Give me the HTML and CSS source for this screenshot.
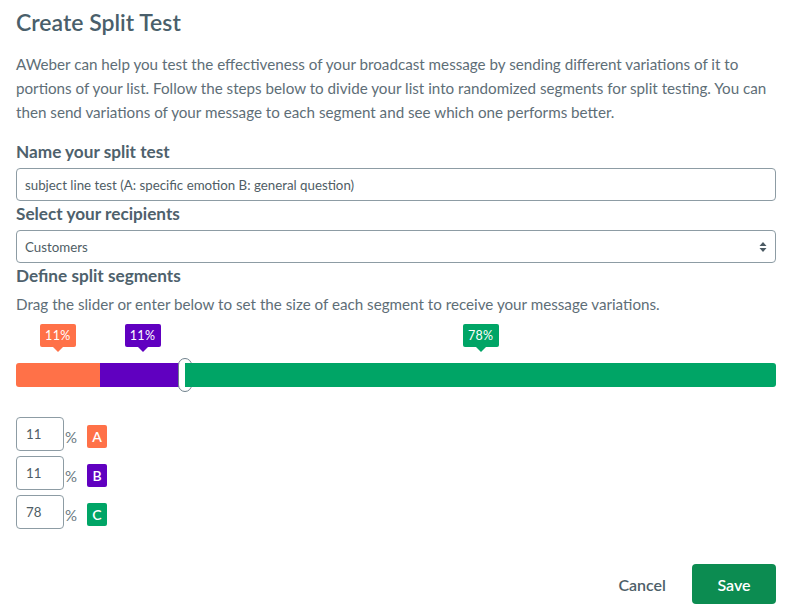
FILE: index.html
```html
<!DOCTYPE html>
<html>
<head>
<meta charset="utf-8">
<link rel="stylesheet" href="styles.css">
</head>
<body>
<div class="page">
  <h1 class="title">Create Split Test</h1>
  <p class="intro">AWeber can help you test the effectiveness of your broadcast message by sending different variations of it to portions of your list. Follow the steps below to divide your list into randomized segments for split testing. You can then send variations of your message to each segment and see which one performs better.</p>

  <h2 class="label">Name your split test</h2>
  <div class="field">subject line test (A: specific emotion B: general question)</div>

  <h2 class="label">Select your recipients</h2>
  <div class="field select">
    <span>Customers</span>
    <svg class="arrows" width="8" height="12" viewBox="0 0 8 12"><path d="M4 1 L7.5 5 L0.5 5 Z M4 11 L7.5 7 L0.5 7 Z" fill="#4b5a63"/></svg>
  </div>

  <h2 class="label">Define split segments</h2>
  <p class="hint">Drag the slider or enter below to set the size of each segment to receive your message variations.</p>

  <div class="slider">
    <div class="seg seg-a" style="width:11%"><span class="tip tip-a">11%</span></div>
    <div class="seg seg-b" style="width:11.3%"><span class="tip tip-b">11%</span><span class="handle"></span></div>
    <div class="seg seg-c"><span class="tip tip-c">78%</span></div>
  </div>

  <div class="rows">
    <div class="row"><div class="num">11</div><span class="pct">%</span><span class="badge badge-a">A</span></div>
    <div class="row"><div class="num">11</div><span class="pct">%</span><span class="badge badge-b">B</span></div>
    <div class="row"><div class="num">78</div><span class="pct">%</span><span class="badge badge-c">C</span></div>
  </div>

  <div class="actions">
    <button class="cancel">Cancel</button>
    <button class="save">Save</button>
  </div>
</div>
</body>
</html>
```

FILE: styles.css
```css
* { box-sizing: border-box; }
body {
  margin: 0;
  background: #ffffff;
  font-family: "Source Sans Pro", Lato, "Noto Sans", sans-serif;
  color: #5b6b74;
}
.page {
  padding: 6px 9px 0 16px;
  width: 785px;
}
.title {
  margin: 0;
  font-size: 23px;
  font-weight: 600;
  color: #4a5f6b;
  line-height: 32px;
}
.intro {
  margin: 14px 0 17px;
  font-size: 15.2px;
  line-height: 24px;
  color: #5e6e77;
}
.label {
  margin: 0 0 5px;
  font-size: 17.2px;
  font-weight: 700;
  color: #4e616c;
  line-height: 22px;
}
.field {
  height: 33px;
  border: 1px solid #8d9ca4;
  border-radius: 4px;
  padding: 0 8px;
  font-size: 13.3px;
  color: #4f5d65;
  display: flex;
  align-items: center;
  margin-bottom: 2px;
}
.select { justify-content: space-between; }
.hint {
  margin: 5px 0 14px;
  font-size: 15.2px;
  line-height: 24px;
  color: #5e6e77;
}
.slider {
  margin-top: 47px;
  height: 24px;
  display: flex;
  border-radius: 3px;
}
.seg { position: relative; height: 100%; }
.seg-a { background: #ff7148; border-radius: 3px 0 0 3px; }
.seg-b { background: #6000c0; }
.seg-c { background: #00a566; flex: 1; border-radius: 0 3px 3px 0; }
.tip {
  position: absolute;
  left: 50%;
  bottom: 40px;
  transform: translateX(-50%);
  width: 36px;
  height: 23px;
  border-radius: 2px;
  color: #fff;
  font-size: 12.5px;
  letter-spacing: 0.3px;
  line-height: 23px;
  text-align: center;
}
.tip::after {
  content: "";
  position: absolute;
  left: 50%;
  top: 100%;
  margin-left: -5px;
  border-left: 5px solid transparent;
  border-right: 5px solid transparent;
  border-top: 5px solid transparent;
}
.tip-a { background: #ff7148; }
.tip-b { background: #6000c0; }
.tip-c { background: #00a566; }
.tip-a::after { border-top-color: #ff7148; }
.tip-b::after { border-top-color: #6000c0; }
.tip-c::after { border-top-color: #00a566; }
.handle {
  position: absolute;
  right: -7px;
  top: -5px;
  width: 14px;
  height: 34px;
  background: #fff;
  border: 1.5px solid #6f818c;
  border-radius: 7px;
}
.rows {
  margin-top: 30px;
  display: flex;
  flex-direction: column;
  gap: 5px;
}
.row { display: flex; align-items: center; }
.num {
  width: 48px;
  height: 34px;
  border: 1px solid #8d9ca4;
  border-radius: 4px;
  padding-left: 9px;
  font-size: 13.3px;
  color: #4f5d65;
  display: flex;
  align-items: center;
  flex: none;
}
.pct {
  font-size: 15px;
  color: #6b7a82;
  margin: 5px 0 0 1px;
  width: 22px;
}
.badge {
  width: 20px;
  height: 23px;
  border-radius: 2px;
  color: #fff;
  font-size: 14px;
  font-weight: 600;
  display: flex;
  align-items: center;
  justify-content: center;
  margin-top: 4px;
}
.badge-a { background: #ff7148; }
.badge-b { background: #6000c0; }
.badge-c { background: #00a566; }
.actions {
  margin-top: 35px;
  display: flex;
  justify-content: flex-end;
  align-items: center;
  gap: 26px;
}
button {
  font-family: inherit;
  font-size: 16px;
  font-weight: 600;
  border: 0;
  cursor: pointer;
}
.cancel { background: none; color: #4e5f69; padding: 0; }
.save {
  width: 84px;
  height: 40px;
  background: #0c8c51;
  color: #fff;
  border-radius: 4px;
}
```
